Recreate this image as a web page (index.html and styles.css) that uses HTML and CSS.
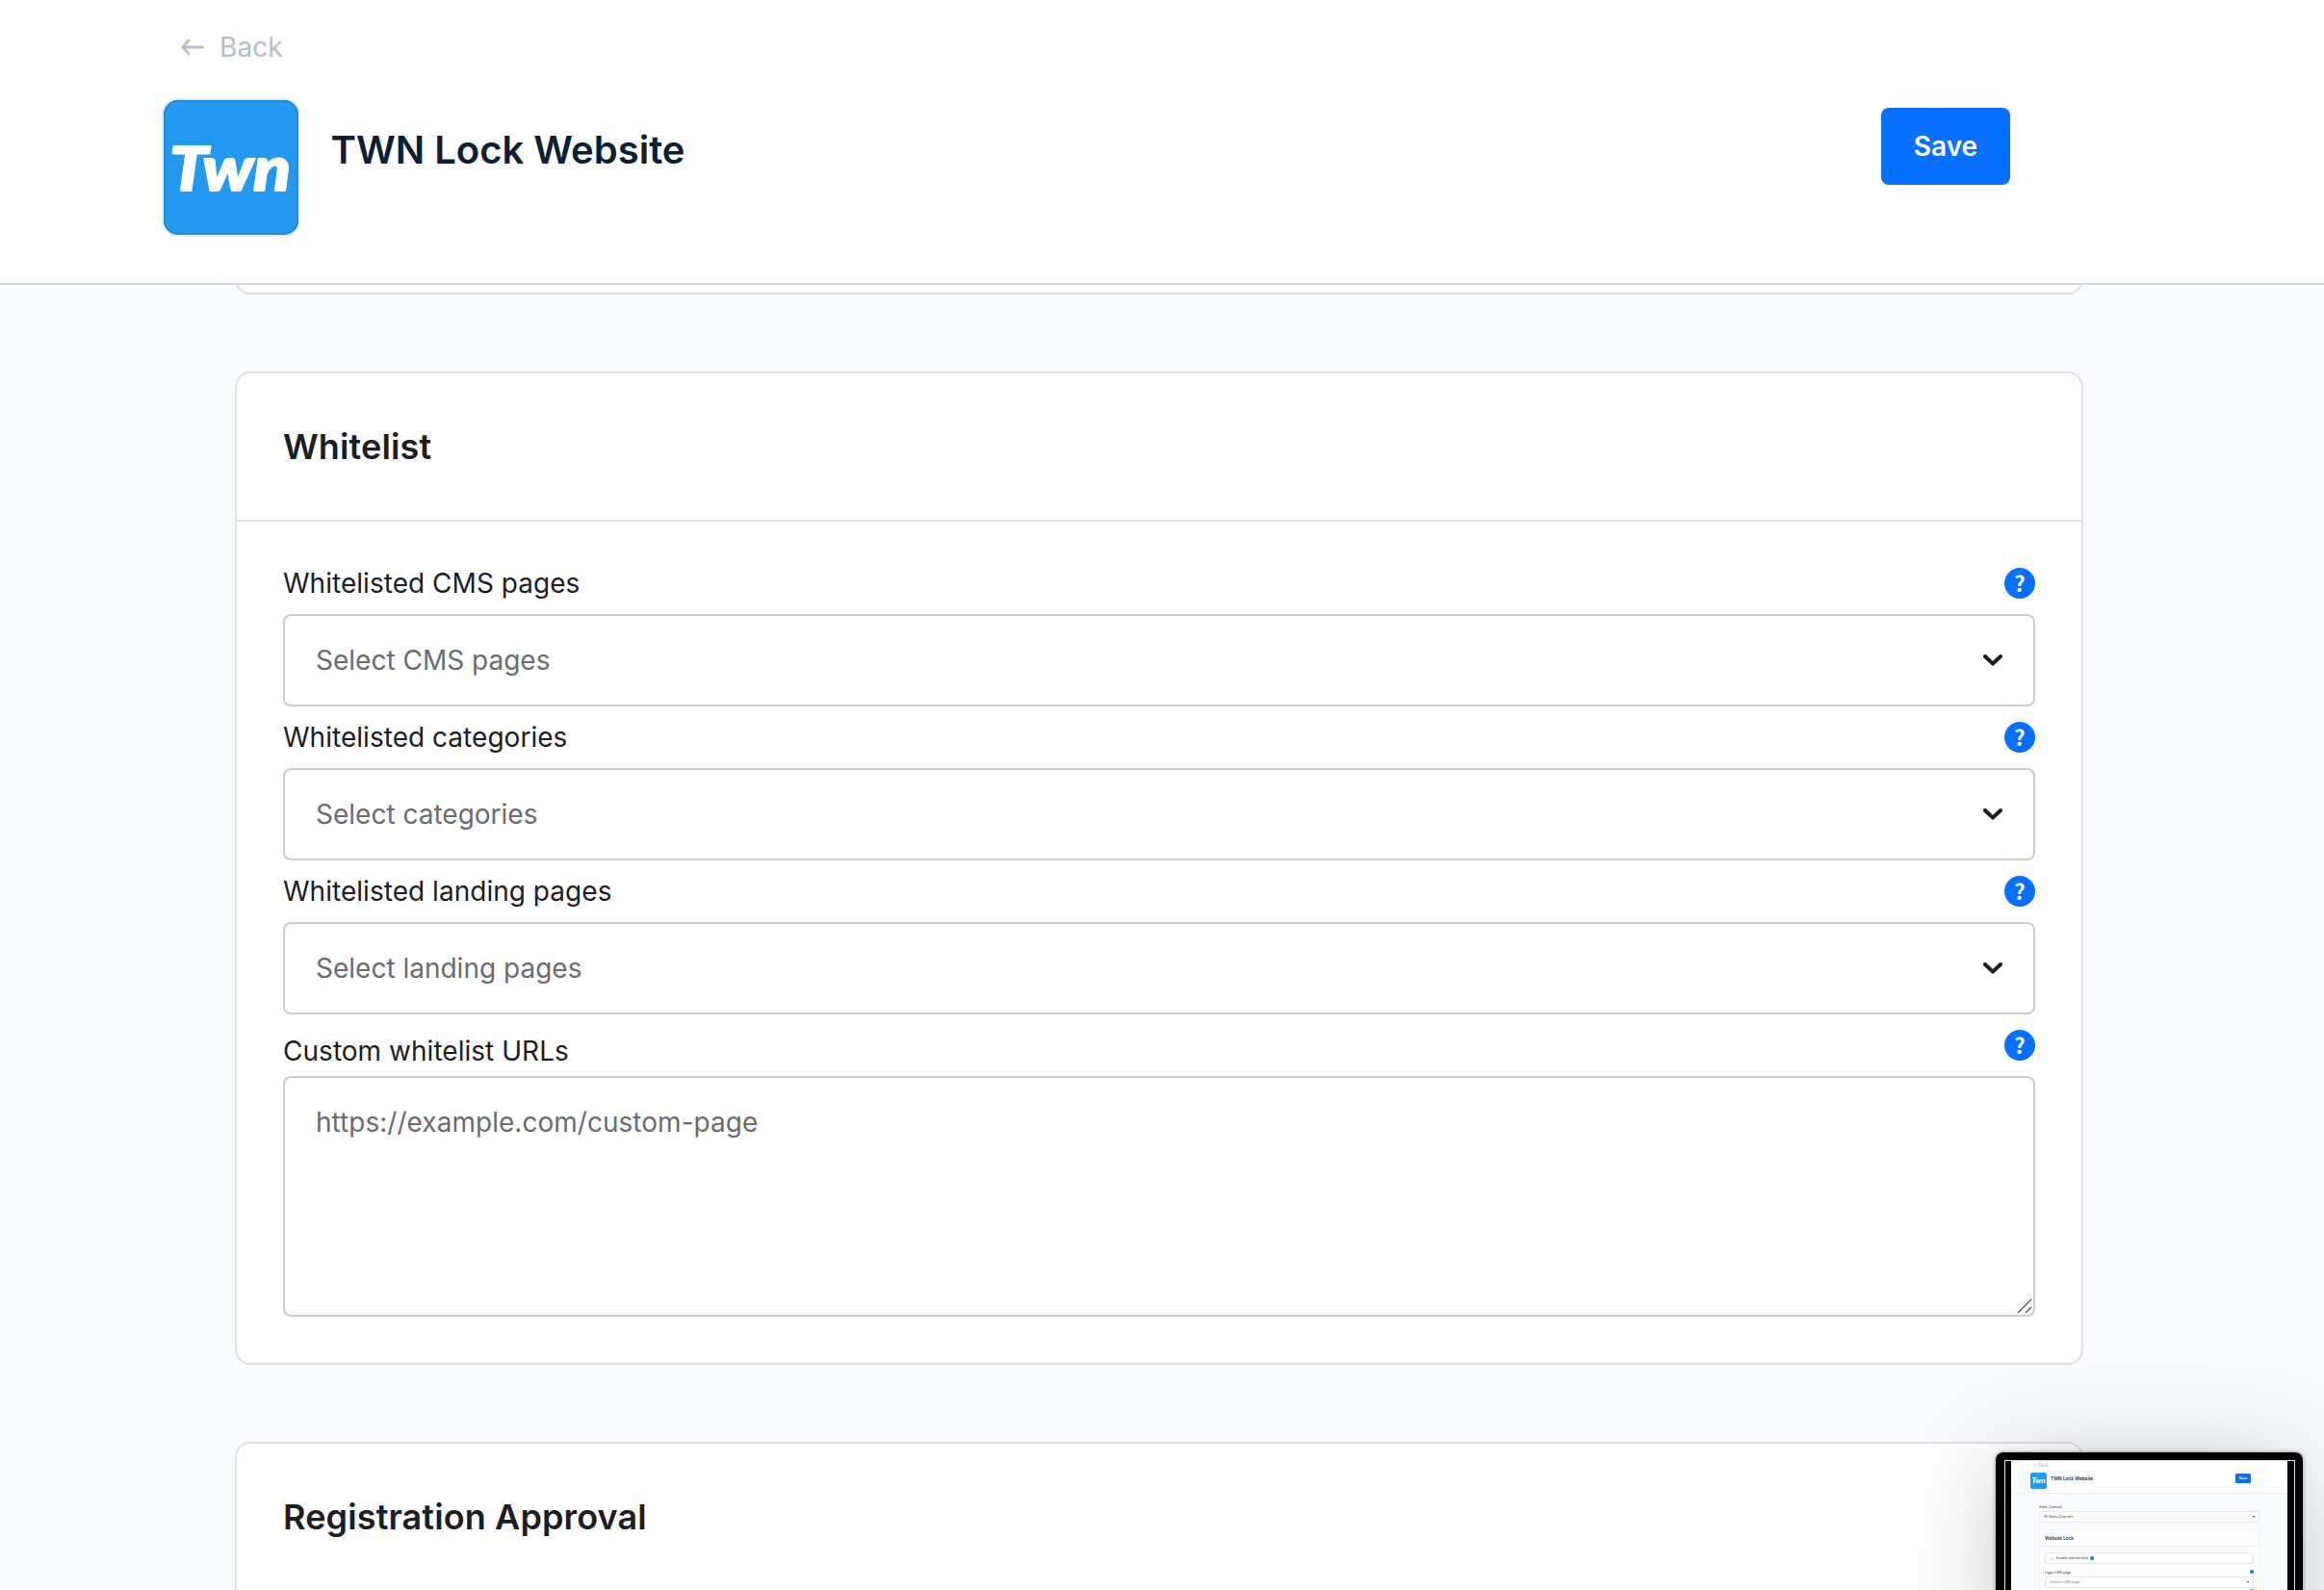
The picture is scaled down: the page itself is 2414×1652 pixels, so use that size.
FILE: index.html
```html
<!DOCTYPE html>
<html lang="en">
<head>
<meta charset="utf-8">
<title>TWN Lock Website</title>
<link rel="stylesheet" href="styles.css">
</head>
<body>
<header class="page-header">
  <a class="back">
    <svg class="back-arrow" viewBox="0 0 24 18"><path d="M8 2 L1.8 9 L8 16 M2.5 9 H22.5" fill="none" stroke="currentColor" stroke-width="2.8" stroke-linecap="round" stroke-linejoin="round"/></svg>
    <span>Back</span>
  </a>
  <div class="title-row">
    <div class="logo">
      <svg viewBox="0 0 140 140"><text class="logo-text" x="6" y="94" textLength="126" lengthAdjust="spacingAndGlyphs">Twn</text></svg>
    </div>
    <h1 class="title">TWN Lock Website</h1>
    <button class="save">Save</button>
  </div>
</header>
<main class="content">
  <section class="card card-tail"></section>
  <section class="card">
    <h2 class="card-header">Whitelist</h2>
    <div class="card-body">
      <div class="field">
        <div class="field-head"><label>Whitelisted CMS pages</label><span class="help">?</span></div>
        <div class="select"><span>Select CMS pages</span><svg class="chevron" viewBox="0 0 20 12"><path d="M2 2 L10 9.6 L18 2"/></svg></div>
      </div>
      <div class="field">
        <div class="field-head"><label>Whitelisted categories</label><span class="help">?</span></div>
        <div class="select"><span>Select categories</span><svg class="chevron" viewBox="0 0 20 12"><path d="M2 2 L10 9.6 L18 2"/></svg></div>
      </div>
      <div class="field">
        <div class="field-head"><label>Whitelisted landing pages</label><span class="help">?</span></div>
        <div class="select"><span>Select landing pages</span><svg class="chevron" viewBox="0 0 20 12"><path d="M2 2 L10 9.6 L18 2"/></svg></div>
      </div>
      <div class="field">
        <div class="field-head"><label class="label-low">Custom whitelist URLs</label><span class="help">?</span></div>
        <div class="textarea"><span>https://example.com/custom-page</span>
          <svg class="grip" viewBox="0 0 16 16"><path d="M1 15 L15 1 M9 15 L15 9"/></svg>
        </div>
      </div>
    </div>
  </section>
  <section class="card card-open">
    <h2 class="card-header">Registration Approval</h2>
  </section>
</main>
<aside class="preview">
  <div class="preview-glass">
    <div class="preview-page">
      <div class="mini-header">
        <div class="mini-back">← Back</div>
        <div class="mini-row">
          <div class="mini-logo">Twn</div>
          <div class="mini-title">TWN Lock Website</div>
          <div class="mini-save">Save</div>
        </div>
      </div>
      <div class="mini-main">
        <div class="mini-label">Sales Channel</div>
        <div class="mini-select">All Sales Channels<i class="mini-caret"></i></div>
        <div class="mini-card">
          <div class="mini-card-head">Website Lock</div>
          <div class="mini-card-body">
            <div class="mini-switch-row"><i class="mini-switch"></i>Enable website lock<i class="mini-help"></i></div>
            <div class="mini-label mini-spread">Login CMS page<i class="mini-help"></i></div>
            <div class="mini-select mini-muted">Select a CMS page<i class="mini-caret"></i></div>
            <div class="mini-next"><i class="mini-help"></i></div>
          </div>
        </div>
      </div>
    </div>
  </div>
</aside>
</body>
</html>
```
FILE: styles.css
```css
* { box-sizing: border-box; }
body {
  margin: 0;
  height: 1652px;
  overflow: hidden;
  position: relative;
  background: #fafbff;
  color: #1d1d24;
  font-family: Inter, "Liberation Sans", sans-serif;
  font-size: 28px;
}
.page-header {
  position: relative;
  z-index: 1;
  height: 296px;
  padding: 28px 326px 0 170px;
  background: #fff;
  border-bottom: 2px solid #d1d9e0;
}
.back {
  display: flex;
  align-items: center;
  gap: 16px;
  height: 42px;
  padding-left: 18px;
  color: #b3bfcc;
  letter-spacing: .1px;
}
.back-arrow { width: 24px; height: 18px; }
.title-row { display: flex; align-items: flex-start; margin-top: 34px; }
.logo {
  width: 140px;
  height: 140px;
  border-radius: 15px;
  background: #239af0;
  box-shadow: inset 0 0 0 2px #208cdb, 0 0 0 2px #ececec;
}
.logo svg { display: block; width: 140px; height: 140px; }
.logo-text {
  font: italic 900 62px Lato, sans-serif;
  fill: #fff;
  stroke: #fff;
  stroke-width: 2;
  stroke-linejoin: round;
}
.title { margin: 24px 0 0 33.5px; font-size: 40px; line-height: 56px; font-weight: 600; color: #0b1f35; }
.save {
  width: 134px;
  height: 80px;
  margin: 8px 0 0 auto;
  border: 0;
  border-radius: 8px;
  background: #0870ff;
  color: #fff;
  font: 600 28px Inter, sans-serif;
}
.content { width: 1920px; margin-left: 244px; display: flex; flex-direction: column; gap: 80px; }
.card { background: #fff; border: 2px solid #e0e0e9; border-radius: 16px; }
/* scrolled under the header, only the bottom edge shows */
.card-tail { height: 60px; margin-top: -50px; }
.card-open { height: 400px; }
.card-header {
  margin: 0;
  height: 154px;
  padding: 0 48px;
  line-height: 152px;
  font-size: 36px;
  font-weight: 600;
  letter-spacing: .12px;
  border-bottom: 2px solid #e0e0e9;
}
.card-body { padding: 48px; display: flex; flex-direction: column; gap: 16px; }
.field-head { display: flex; align-items: center; justify-content: space-between; height: 32px; margin-bottom: 16px; }
.field-head label { letter-spacing: .03px; }
.label-low { padding-top: 12px; }
.help {
  width: 32px;
  height: 32px;
  border-radius: 50%;
  background: #0870ff;
  color: #fff;
  font: 700 22px/31px "Noto Sans CJK SC", sans-serif;
  text-align: center;
}
.select {
  display: flex;
  align-items: center;
  justify-content: space-between;
  height: 96px;
  padding: 0 32px;
  border: 2px solid #cbcad5;
  border-radius: 8px;
  color: #6b6b70;
}
.chevron { width: 20px; height: 12px; fill: none; stroke: #1c1c22; stroke-width: 4; stroke-linecap: round; stroke-linejoin: round; }
.textarea {
  display: flex;
  justify-content: space-between;
  height: 250px;
  padding: 25px 1px 1px 32px;
  border: 2px solid #cbcad5;
  border-radius: 8px;
  line-height: 42px;
  letter-spacing: .03px;
  color: #6b6b70;
}
.grip { align-self: flex-end; width: 16px; height: 16px; fill: none; stroke: #555; stroke-width: 1.4; }

/* floating capture preview over the page corner */
.preview {
  position: absolute;
  z-index: 2;
  left: 2073px;
  top: 1509px;
  width: 319px;
  height: 220px;
  padding: 8px 8px 0 9px;
  border-radius: 8px 8px 0 0;
  background: #000;
  box-shadow: 0 10px 100px rgba(0, 0, 0, .2), 0 0 4px rgba(0, 0, 0, .4);
}
.preview-glass { height: 100%; padding: 0 7px 0 6px; border: 1px solid #ddd; border-bottom: 0; background: #000; }
.preview-page { height: 100%; background: #fafbff; font-size: 4.3px; line-height: 6px; color: #333; }
.mini-header { height: 34px; padding: 2px 38px 0 20px; background: #fff; border-bottom: 1px solid #eceef2; }
.mini-back { padding-left: 3px; color: #aab4c0; }
.mini-row { display: flex; margin-top: 4px; }
.mini-logo { width: 17px; height: 17px; border-radius: 2px; background: #239af0; color: #fff; font: italic 900 8px/17px Lato, sans-serif; text-align: center; }
.mini-title { margin: 3px 0 0 4px; font-size: 4.8px; font-weight: 600; color: #0b1f35; }
.mini-save { width: 16px; height: 10px; margin: 1px 0 0 auto; border-radius: 1px; background: #0870ff; color: #fff; font-weight: 600; line-height: 10px; text-align: center; font-size: 3.6px; }
.mini-main { padding: 11px 29px 0; }
.mini-label { height: 7px; font-size: 3.5px; }
.mini-select { display: flex; justify-content: space-between; align-items: center; height: 12px; padding: 0 4px; background: #fff; border: 1px solid #e9e9ee; font-size: 3.5px; }
.mini-muted { color: #777; }
.mini-caret { border: 1.5px solid transparent; border-top: 2px solid #222; border-bottom: 0; }
.mini-card { margin-top: 7px; background: #fff; border: 1px solid #f2f3f6; }
.mini-card-head { height: 17px; padding-left: 5px; border-bottom: 1px solid #f0f1f4; line-height: 17px; font-size: 4.6px; font-weight: 600; }
.mini-card-body { padding: 6px 5px; }
.mini-switch-row { display: flex; align-items: center; gap: 2px; height: 12px; margin-bottom: 6px; padding-left: 4px; border: 1px solid #e9e9ee; font-size: 3.5px; }
.mini-switch { width: 5px; height: 3px; border: 1px solid #d5d7df; border-radius: 2px; }
.mini-help { width: 4px; height: 4px; border-radius: 50%; background: #0870ff; }
.mini-spread { display: flex; justify-content: space-between; }
.mini-next { display: flex; justify-content: flex-end; margin-top: 1px; }
```
